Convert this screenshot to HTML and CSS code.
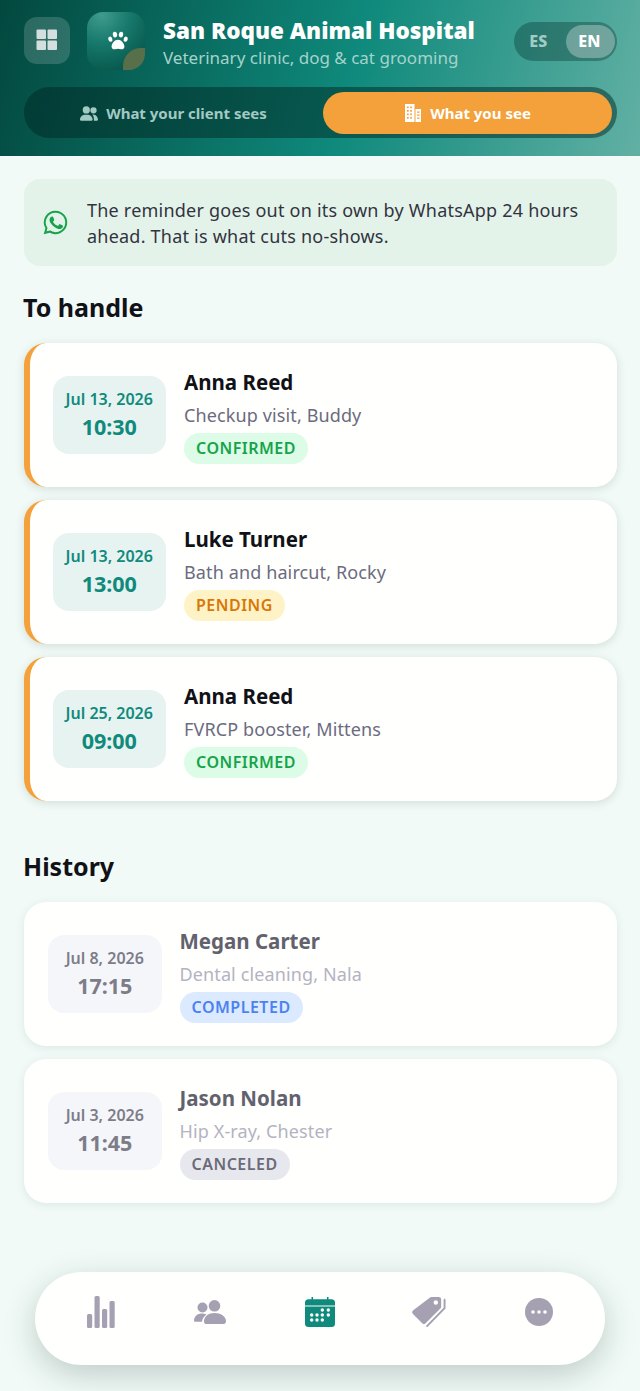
FILE: index.html
```html
<!DOCTYPE html>
<html lang="en">
<head>
<meta charset="utf-8">
<title>San Roque Animal Hospital</title>
<link rel="stylesheet" href="styles.css">
</head>
<body>
<header class="header">
  <div class="brand-row">
    <button class="grid-btn" aria-label="Menu">
      <svg viewBox="0 0 22 22" width="22" height="22"><g fill="#d3dede"><rect x="0.5" y="0.5" width="9.5" height="9.5" rx="1"/><rect x="11.5" y="0.5" width="9.5" height="9.5" rx="1"/><rect x="0.5" y="11.5" width="9.5" height="9.5" rx="1"/><rect x="11.5" y="11.5" width="9.5" height="9.5" rx="1"/></g></svg>
    </button>
    <div class="logo">
      <svg viewBox="0 0 24 24" width="22" height="22" class="paw"><g fill="#fff"><ellipse cx="3.6" cy="10" rx="2.2" ry="2.9" transform="rotate(-18 3.6 10)"/><ellipse cx="8.7" cy="5" rx="2.4" ry="3.2" transform="rotate(-6 8.7 5)"/><ellipse cx="15.3" cy="5" rx="2.4" ry="3.2" transform="rotate(6 15.3 5)"/><ellipse cx="20.4" cy="10" rx="2.2" ry="2.9" transform="rotate(18 20.4 10)"/><path d="M12 10.5c-3.6 0-7 4-7 7.4 0 2.3 1.8 3.3 3.6 3.1 1.3-.1 2.3-.6 3.4-.6s2.100.5 3.400.6c1.800.2 3.600-.8 3.600-3.100 0-3.400-3.400-7.400-7-7.400z"/></g></svg>
      <span class="logo-leaf"></span>
    </div>
    <div class="brand-text">
      <h1 class="brand-name">San Roque Animal Hospital</h1>
      <p class="brand-sub">Veterinary clinic, dog &amp; cat grooming</p>
    </div>
    <div class="lang">
      <span class="lang-opt">ES</span>
      <span class="lang-opt lang-on">EN</span>
    </div>
  </div>
  <div class="tabs">
    <div class="tab">
      <svg viewBox="0 0 640 512" width="18" height="15"><path fill="currentColor" d="M224 256a128 128 0 1 0 0-256 128 128 0 1 0 0 256zM178 304C79.500 304 0 383.500 0 482c0 16.400 13.300 30 29.700 30h388.600c16.400 0 29.700-13.600 29.700-30 0-98.500-79.800-178-178-178h-92zM480 256a112 112 0 1 0 0-224 112 112 0 1 0 0 224zM436 288c27 22 60 70 60 194 0 11-2 21-6 30h120c16 0 30-14 30-31 0-88-71-193-168-193h-36z"/></svg>
      <span>What your client sees</span>
    </div>
    <div class="tab tab-on">
      <svg viewBox="0 0 18 18" width="18" height="18"><path fill="#fff" fill-rule="evenodd" d="M1 0h9.500v18H1zM11.500 5H17v13h-5.500zM3 2.500v1.700h1.700V2.500zm3.200 0v1.700h1.700V2.500zM3 6v1.700h1.700V6zm3.200 0v1.700h1.700V6zM3 9.500v1.700h1.700V9.500zm3.200 0v1.700h1.700V9.500zM3 13v1.700h1.700V13zm3.200 0v1.700h1.700V13zM13 7.500v1.300h2.500V7.500zm0 3v1.300h2.500v-1.300zm0 3v1.300h2.500v-1.300z"/></svg>
      <span>What you see</span>
    </div>
  </div>
</header>

<main class="main">
  <div class="notice">
    <svg class="wa" viewBox="0 0 24 24" width="27" height="27"><path fill="#16a34a" d="M12.040 1.500A10.430 10.430 0 0 0 3.060 17.220L1.500 22.500l5.430-1.430A10.430 10.430 0 1 0 12.040 1.500zm0 1.800a8.630 8.630 0 1 1-4.630 15.920l-.34-.21-3 .79.830-2.900-.23-.36A8.630 8.630 0 0 1 12.040 3.300z"/><path fill="#16a34a" d="M8.500 6.900c-.2 0-.5.100-.8.400-.3.300-1 1-1 2.400s1 2.800 1.200 3c.100.200 2 3.200 5 4.300 2.500 1 3 .800 3.500.700.600-.100 1.800-.7 2-1.400.300-.7.300-1.300.200-1.400-.100-.100-.3-.200-.6-.400l-2-1c-.3-.100-.5-.100-.7.200l-.9 1.100c-.200.200-.3.200-.6.100-.3-.200-1.200-.5-2.300-1.400-.9-.8-1.400-1.700-1.600-2-.200-.3 0-.5.100-.6l.5-.5.300-.5c.100-.200 0-.4 0-.5l-.9-2.200c-.200-.5-.500-.5-.700-.5z"/></svg>
    <p>The reminder goes out on its own by WhatsApp 24 hours ahead. That is what cuts no-shows.</p>
  </div>

  <h2 class="section-title">To handle</h2>
  <div class="list">
    <article class="card card-open">
      <div class="when"><span class="date">Jul 13, 2026</span><span class="time">10:30</span></div>
      <div class="info"><h3 class="who">Anna Reed</h3><p class="what">Checkup visit, Buddy</p><span class="badge b-confirmed">CONFIRMED</span></div>
    </article>
    <article class="card card-open">
      <div class="when"><span class="date">Jul 13, 2026</span><span class="time">13:00</span></div>
      <div class="info"><h3 class="who">Luke Turner</h3><p class="what">Bath and haircut, Rocky</p><span class="badge b-pending">PENDING</span></div>
    </article>
    <article class="card card-open">
      <div class="when"><span class="date">Jul 25, 2026</span><span class="time">09:00</span></div>
      <div class="info"><h3 class="who">Anna Reed</h3><p class="what">FVRCP booster, Mittens</p><span class="badge b-confirmed">CONFIRMED</span></div>
    </article>
  </div>

  <h2 class="section-title section-history">History</h2>
  <div class="list">
    <article class="card card-past">
      <div class="when"><span class="date">Jul 8, 2026</span><span class="time">17:15</span></div>
      <div class="info"><h3 class="who">Megan Carter</h3><p class="what">Dental cleaning, Nala</p><span class="badge b-completed">COMPLETED</span></div>
    </article>
    <article class="card card-past">
      <div class="when"><span class="date">Jul 3, 2026</span><span class="time">11:45</span></div>
      <div class="info"><h3 class="who">Jason Nolan</h3><p class="what">Hip X-ray, Chester</p><span class="badge b-canceled">CANCELED</span></div>
    </article>
  </div>
</main>

<nav class="bottom-nav">
  <svg viewBox="0 0 28 32" width="28" height="32"><g fill="#a5a1b3"><rect x="0" y="18" width="5.200" height="14" rx="1.500"/><rect x="7.500" y="0" width="5.200" height="32" rx="1.500"/><rect x="15" y="13" width="5.200" height="19" rx="1.500"/><rect x="22.500" y="5" width="5.200" height="27" rx="1.500"/></g></svg>
  <svg viewBox="0 0 32 24" width="32" height="24"><g fill="#a5a1b3"><circle cx="8.500" cy="7.500" r="5"/><path d="M0 21c0-5 3.500-7.500 8-7.500 1.700 0 3.200.3 4.500 1-2.600 1.800-4.200 4.200-4.500 7.300H1.500C.6 21.800 0 21.500 0 21z"/><circle cx="20.500" cy="5.800" r="5.800"/><path d="M10 21.500c0-5.300 4.500-8.500 10.500-8.500S32 16.200 32 21.500c0 1.300-1 2.500-2.500 2.500h-18C11 24 10 22.800 10 21.500z"/></g></svg>
  <svg viewBox="0 0 30 30" width="30" height="30"><path fill="#0f8a7c" fill-rule="evenodd" d="M6.500 0h1.600v2.200h13.800V0h1.600v2.200h3A3.500 3.500 0 0 1 30 5.700V8.500H0V5.700a3.500 3.500 0 0 1 3.500-3.500h3zM0 9.500h30v17a3.500 3.500 0 0 1-3.500 3.500h-23A3.500 3.500 0 0 1 0 26.500z"/><g fill="#fff"><circle cx="17.300" cy="13" r="1.700"/><circle cx="23.300" cy="13" r="1.700"/><circle cx="6.700" cy="18" r="1.700"/><circle cx="12" cy="18" r="1.700"/><circle cx="17.300" cy="18" r="1.700"/><circle cx="23.300" cy="18" r="1.700"/><circle cx="6.700" cy="23" r="1.700"/><circle cx="12" cy="23" r="1.700"/><circle cx="17.300" cy="23" r="1.700"/></g></svg>
  <svg viewBox="0 0 36 32" width="35" height="33"><path fill="#a5a1b3" fill-rule="evenodd" d="M20 1h7.500A2.500 2.500 0 0 1 30 3.500V11a2.500 2.500 0 0 1-.8 1.800L14 28a2.500 2.500 0 0 1-3.500 0L1 18.500a2.500 2.500 0 0 1 0-3.500L18.200 1.800A2.500 2.500 0 0 1 20 1zm4.500 3.500a2.300 2.300 0 1 0 0 4.600 2.300 2.300 0 0 0 0-4.600z"/><path fill="none" stroke="#a5a1b3" stroke-width="2" stroke-linecap="round" d="M33.500 4v8.500L15.500 31"/></svg>
  <svg viewBox="0 0 28 28" width="28" height="28"><circle cx="14" cy="14" r="14" fill="#a5a1b3"/><g fill="#fff"><circle cx="8" cy="14" r="1.800"/><circle cx="14" cy="14" r="1.800"/><circle cx="20" cy="14" r="1.800"/></g></svg>
</nav>
</body>
</html>
```

FILE: styles.css
```css
* { box-sizing: border-box; }
html, body { margin: 0; padding: 0; }
body {
  width: 640px;
  height: 1391px;
  overflow: hidden;
  font-family: "Noto Sans", sans-serif;
  color: #111118;
  background: #f1faf6;
}
h1, h2, h3, p { margin: 0; }

.header {
  height: 156px;
  padding: 12px 23px 0 24px;
  background: linear-gradient(105deg, #03483f 0%, #0f8a7c 55%, #62b0a4 100%);
}
.brand-row { display: flex; align-items: center; height: 58px; }
.grid-btn {
  width: 46px;
  height: 47px;
  border: 0;
  padding: 0;
  border-radius: 13px;
  background: rgba(255,255,255,.16);
  display: flex;
  align-items: center;
  justify-content: center;
  margin-right: 17px;
  margin-top: -2px;
}
.logo {
  position: relative;
  width: 58px;
  height: 58px;
  border-radius: 16px;
  overflow: hidden;
  background: radial-gradient(circle at 25% 5%, #3e9c8d 0%, #17796c 40%, #07564b 85%);
  display: flex;
  align-items: center;
  justify-content: center;
  margin-right: 18px;
  flex: none;
}
.paw { margin-top: -1px; margin-left: 4px; }
.logo-leaf {
  position: absolute;
  right: 0;
  bottom: 0;
  width: 22px;
  height: 22px;
  background: #57704b;
  border-radius: 18px 0 0 0;
}
.brand-text { flex: 1; min-width: 0; padding-top: 6px; }
.brand-name {
  font-size: 22.500px;
  font-weight: 900;
  line-height: 28px;
  color: #fff;
  white-space: nowrap;
  margin-top: -1px;
}
.brand-sub { font-size: 17px; line-height: 24px; color: #a4d3cb; white-space: nowrap; margin-top: 1px; }
.lang {
  width: 103px;
  height: 39px;
  border-radius: 20px;
  padding: 3px 2px 3px 3px;
  background: rgba(0,40,35,.33);
  display: flex;
  align-items: center;
  justify-content: space-between;
  font-size: 16px;
  font-weight: 800;
}
.lang-opt { width: 50px; text-align: center; color: #a1cdc5; padding-right: 6px; }
.lang-on {
  width: 51px;
  height: 33px;
  line-height: 33px;
  border-radius: 17px;
  background: rgba(255,255,255,.3);
  color: #fff;
  padding-right: 2px;
}

.tabs {
  display: flex;
  height: 51px;
  margin-top: 17px;
  padding: 5px 5px 4px 0;
  border-radius: 26px;
  background: rgba(0,40,35,.5);
}
.tab {
  flex: 1;
  display: flex;
  align-items: center;
  justify-content: center;
  gap: 8px;
  font-size: 15px;
  font-weight: 700;
  color: #a3c9c3;
  border-radius: 22px;
  height: 42px;
}
.tab-on {
  flex: none;
  width: 289px;
  background: #f4a13c;
  color: #fff;
}

.main { padding: 23px 23px 0 24px; }
.notice {
  display: flex;
  align-items: center;
  gap: 18px;
  height: 87px;
  padding: 0 24px 0 18px;
  border-radius: 16px;
  background: #e3f3ea;
}
.notice p { font-size: 18px; line-height: 26px; letter-spacing: .22px; color: #33333f; }
.wa { flex: none; }

.section-title { font-size: 25px; line-height: 32px; font-weight: 700; margin: 25px 0 20px -1px; }
.section-history { margin-top: 49px; }

.list { display: flex; flex-direction: column; gap: 13px; }
.card {
  display: flex;
  align-items: center;
  height: 144px;
  border-radius: 22px;
  background: #fffffd;
  box-shadow: 0 2px 10px rgba(20,60,50,.14);
}
.card-open { border-left: 6px solid #f4a13c; padding-left: 22.500px; }
.card-past { padding-left: 24px; box-shadow: 0 2px 10px rgba(20,60,50,.09); }
.when {
  width: 113.500px;
  height: 78px;
  border-radius: 16px;
  background: #e6f3f1;
  color: #0f8a7c;
  display: flex;
  flex-direction: column;
  align-items: center;
  justify-content: center;
  margin-right: 18px;
  padding-bottom: 1px;
  flex: none;
}
.date { font-size: 16px; font-weight: 600; line-height: 20px; }
.time { font-size: 21.500px; font-weight: 700; line-height: 28px; margin-top: 4px; }
.who { font-size: 20.500px; line-height: 28px; font-weight: 700; color: #111118; }
.what { font-size: 18px; line-height: 24px; letter-spacing: .12px; color: #6b6b80; margin-top: 7px; }
.info { display: flex; flex-direction: column; align-items: flex-start; padding-top: 2px; }
.badge {
  font-size: 16px;
  font-weight: 600;
  letter-spacing: .5px;
  line-height: 31px;
  height: 31px;
  padding: 0 12px;
  border-radius: 16px;
  margin-top: 6px;
}
.b-confirmed { background: #dcfce7; color: #16a34a; }
.b-pending { background: #fef3c7; color: #d97706; }
.b-completed { background: #dbeafe; color: #4b82f0; }
.b-canceled { background: #e7e8ee; color: #6b6b78; }

.card-past .when { background: #f5f6fa; color: #7d7d89; }
.card-past .who { color: #62626e; }
.card-past .what { color: #b3b3c3; }

.bottom-nav {
  position: fixed;
  left: 35px;
  top: 1272px;
  width: 570px;
  height: 93px;
  border-radius: 47px;
  background: #fffffd;
  box-shadow: 0 10px 32px rgba(20,50,45,.22);
  display: grid;
  grid-template-columns: repeat(5, 1fr);
  align-items: center;
  justify-items: center;
  padding: 0 11px 14px;
}
```
